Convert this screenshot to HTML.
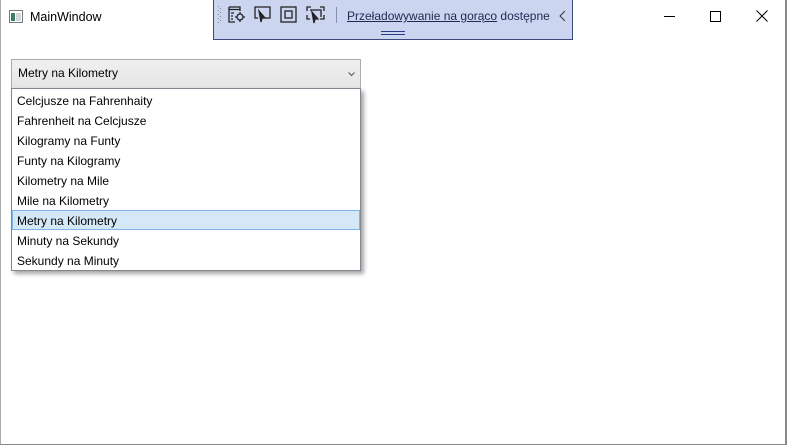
<!DOCTYPE html>
<html><head><meta charset="utf-8"><style>
*{margin:0;padding:0;box-sizing:border-box}
body{width:787px;height:445px;background:#fff;position:relative;overflow:hidden;font-family:"Liberation Sans",sans-serif;font-size:12px;color:#000}
.win{position:absolute;left:0;top:0;width:787px;height:445px;border-right:2px solid #888;border-bottom:1px solid #888;border-left:1px solid #aaa}
.title{position:absolute;left:30px;top:10px;font-size:12.5px}
.tb{position:absolute;left:213px;top:0;width:360px;height:40px;background:#ccd5f0;border:1px solid #3c4a80;border-top:none}
.combo{position:absolute;left:11px;top:59px;width:350px;height:30px;border:1px solid #acacac;background:linear-gradient(#f0f0f0,#e5e5e5)}
.combo span{position:absolute;left:6px;top:6px}
.list{position:absolute;left:11px;top:88px;width:350px;height:183px;border:1px solid #828790;background:#fff;box-shadow:3px 3px 4px rgba(0,0,0,.35)}
.it{position:absolute;left:0;width:348px;height:20px;padding:3px 0 0 5px}
.sel{background:#d5e8f8;border:1px solid #7eb4ea;padding:3px 0 0 4px}
</style></head><body>
<div class="win"></div>
<svg style="position:absolute;left:9px;top:10px" width="14" height="13"><rect x="0.5" y="0.5" width="13" height="12" fill="#fff" stroke="#777"/><rect x="2" y="3" width="4" height="8" fill="#3d7a6a"/><rect x="7" y="3" width="5" height="8" fill="#cfd8dc"/></svg>
<div class="title">MainWindow</div>
<div style="position:absolute;left:710px;top:11px;width:11px;height:11px;border:1px solid #000"></div>
<div style="position:absolute;left:664px;top:16px;width:11px;height:1px;background:#000"></div>
<svg style="position:absolute;left:756px;top:10px" width="12" height="12"><path d="M0.5 0.5L11.5 11.5M11.5 0.5L0.5 11.5" stroke="#000"/></svg>
<div class="tb">
<svg style="position:absolute;left:4px;top:6px" width="6" height="18"><g fill="#888"><rect x="0" y="0" width="1" height="1"/><rect x="2" y="2" width="1" height="1"/><rect x="0" y="4" width="1" height="1"/><rect x="2" y="6" width="1" height="1"/><rect x="0" y="8" width="1" height="1"/><rect x="2" y="10" width="1" height="1"/><rect x="0" y="12" width="1" height="1"/><rect x="2" y="14" width="1" height="1"/><rect x="0" y="16" width="1" height="1"/></g></svg>
<svg style="position:absolute;left:14px;top:6px" width="18" height="18" fill="none" stroke="#222" stroke-width="1.3"><path d="M1 1h11v4M1 1v15h6M1 3.5h11M3 7h3M3 10h2M3 13h2"/><circle cx="12" cy="11" r="3"/><path d="M12 6v2M12 14v2M7 11h2M15 11h2"/></svg>
<svg style="position:absolute;left:40px;top:6px" width="18" height="18" fill="none" stroke="#222" stroke-width="1.3"><path d="M4 12H1V1h15v11h-5"/><path d="M5 5l6 7-3 0-1 4z" fill="#222"/></svg>
<svg style="position:absolute;left:66px;top:6px" width="17" height="17" fill="none" stroke="#222" stroke-width="1.3"><rect x="1" y="1" width="15" height="15"/><rect x="5" y="5" width="7" height="7"/></svg>
<svg style="position:absolute;left:92px;top:6px" width="19" height="18" fill="none" stroke="#222" stroke-width="1.3"><path d="M1 5V1h4M14 1h4v4M1 9v4h3M18 9v4h-4M4 4h11v7"/><path d="M6 6l6 7-3 0-1 4z" fill="#222"/></svg>
<div style="position:absolute;left:122px;top:7px;width:1px;height:16px;background:#8892b0"></div>
<div style="position:absolute;left:133px;top:9px;color:#1e2a50"><u>Przeładowywanie na gorąco</u> dostępne</div>
<svg style="position:absolute;left:345px;top:10px" width="7" height="12"><path d="M6 1L1 6l5 5" fill="none" stroke="#333"/></svg>
<div style="position:absolute;left:167px;top:31px;width:24px;height:1px;background:#2b3a80"></div>
<div style="position:absolute;left:167px;top:34px;width:24px;height:1px;background:#2b3a80"></div>
</div>
<div class="combo"><span>Metry na Kilometry</span><svg style="position:absolute;left:336px;top:12px" width="7" height="5"><path d="M0.5 0.5l3 3 3-3" fill="none" stroke="#555"/></svg></div>
<div class="list">
<div class="it" style="top:2px">Celcjusze na Fahrenhaity</div>
<div class="it" style="top:22px">Fahrenheit na Celcjusze</div>
<div class="it" style="top:42px">Kilogramy na Funty</div>
<div class="it" style="top:62px">Funty na Kilogramy</div>
<div class="it" style="top:82px">Kilometry na Mile</div>
<div class="it" style="top:102px">Mile na Kilometry</div>
<div class="it sel" style="top:121px">Metry na Kilometry</div>
<div class="it" style="top:142px">Minuty na Sekundy</div>
<div class="it" style="top:162px">Sekundy na Minuty</div>
</div>
</body></html>
